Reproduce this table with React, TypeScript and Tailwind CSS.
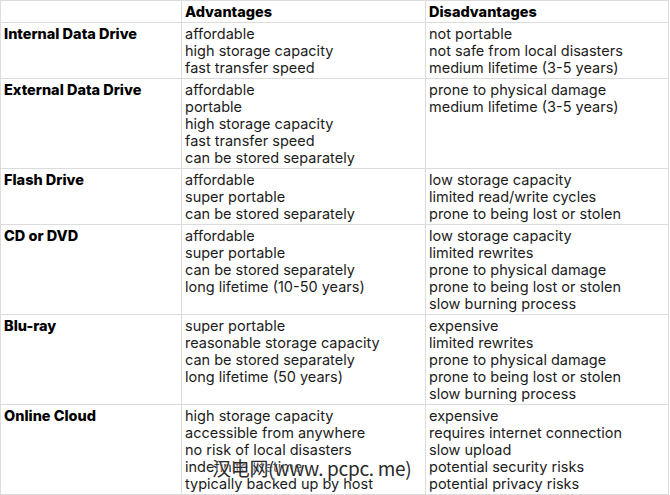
const rows: { name: string; pros: string[]; cons: string[] }[] = [
  {
    name: "Internal Data Drive",
    pros: ["affordable", "high storage capacity", "fast transfer speed"],
    cons: ["not portable", "not safe from local disasters", "medium lifetime (3-5 years)"],
  },
  {
    name: "External Data Drive",
    pros: ["affordable", "portable", "high storage capacity", "fast transfer speed", "can be stored separately"],
    cons: ["prone to physical damage", "medium lifetime (3-5 years)"],
  },
  {
    name: "Flash Drive",
    pros: ["affordable", "super portable", "can be stored separately"],
    cons: ["low storage capacity", "limited read/write cycles", "prone to being lost or stolen"],
  },
  {
    name: "CD or DVD",
    pros: ["affordable", "super portable", "can be stored separately", "long lifetime (10-50 years)"],
    cons: ["low storage capacity", "limited rewrites", "prone to physical damage", "prone to being lost or stolen", "slow burning process"],
  },
  {
    name: "Blu-ray",
    pros: ["super portable", "reasonable storage capacity", "can be stored separately", "long lifetime (50 years)"],
    cons: ["expensive", "limited rewrites", "prone to physical damage", "prone to being lost or stolen", "slow burning process"],
  },
  {
    name: "Online Cloud",
    pros: ["high storage capacity", "accessible from anywhere", "no risk of local disasters", "indefinite lifetime", "typically backed up by host"],
    cons: ["expensive", "requires internet connection", "slow upload", "potential security risks", "potential privacy risks"],
  },
];

function Cell({ children, bold }: { children: React.ReactNode; bold?: boolean }) {
  return (
    <div className={`bg-white px-[3px] py-0.5 ${bold ? "font-extrabold text-black" : "text-[#1c1c1c]"}`}>
      {children}
    </div>
  );
}

export default function App() {
  return (
    <div className="relative w-[670px] h-[495px] bg-white font-['Inter',sans-serif] text-[14.5px] leading-[17px]">
      <div className="w-[669px] grid grid-cols-[180px_243px_242px] gap-px bg-[#dcdcdc] p-px">
        <Cell bold>{""}</Cell>
        <Cell bold>Advantages</Cell>
        <Cell bold>Disadvantages</Cell>
        {rows.map((r) => (
          <div key={r.name} className="contents">
            <Cell bold>{r.name}</Cell>
            <Cell>
              {r.pros.map((p) => (
                <div key={p}>{p}</div>
              ))}
            </Cell>
            <Cell>
              {r.cons.map((c) => (
                <div key={c}>{c}</div>
              ))}
            </Cell>
          </div>
        ))}
      </div>
      <div className="absolute left-[212px] top-[456px] text-[19px] leading-[24px] text-[#2a2a2a] font-['Noto_Sans_CJK_SC',sans-serif] tracking-[-0.3px] [text-shadow:0_0_2px_#fff,0_0_2px_#fff]">
        汉电网(www. pcpc. me)
      </div>
    </div>
  );
}
